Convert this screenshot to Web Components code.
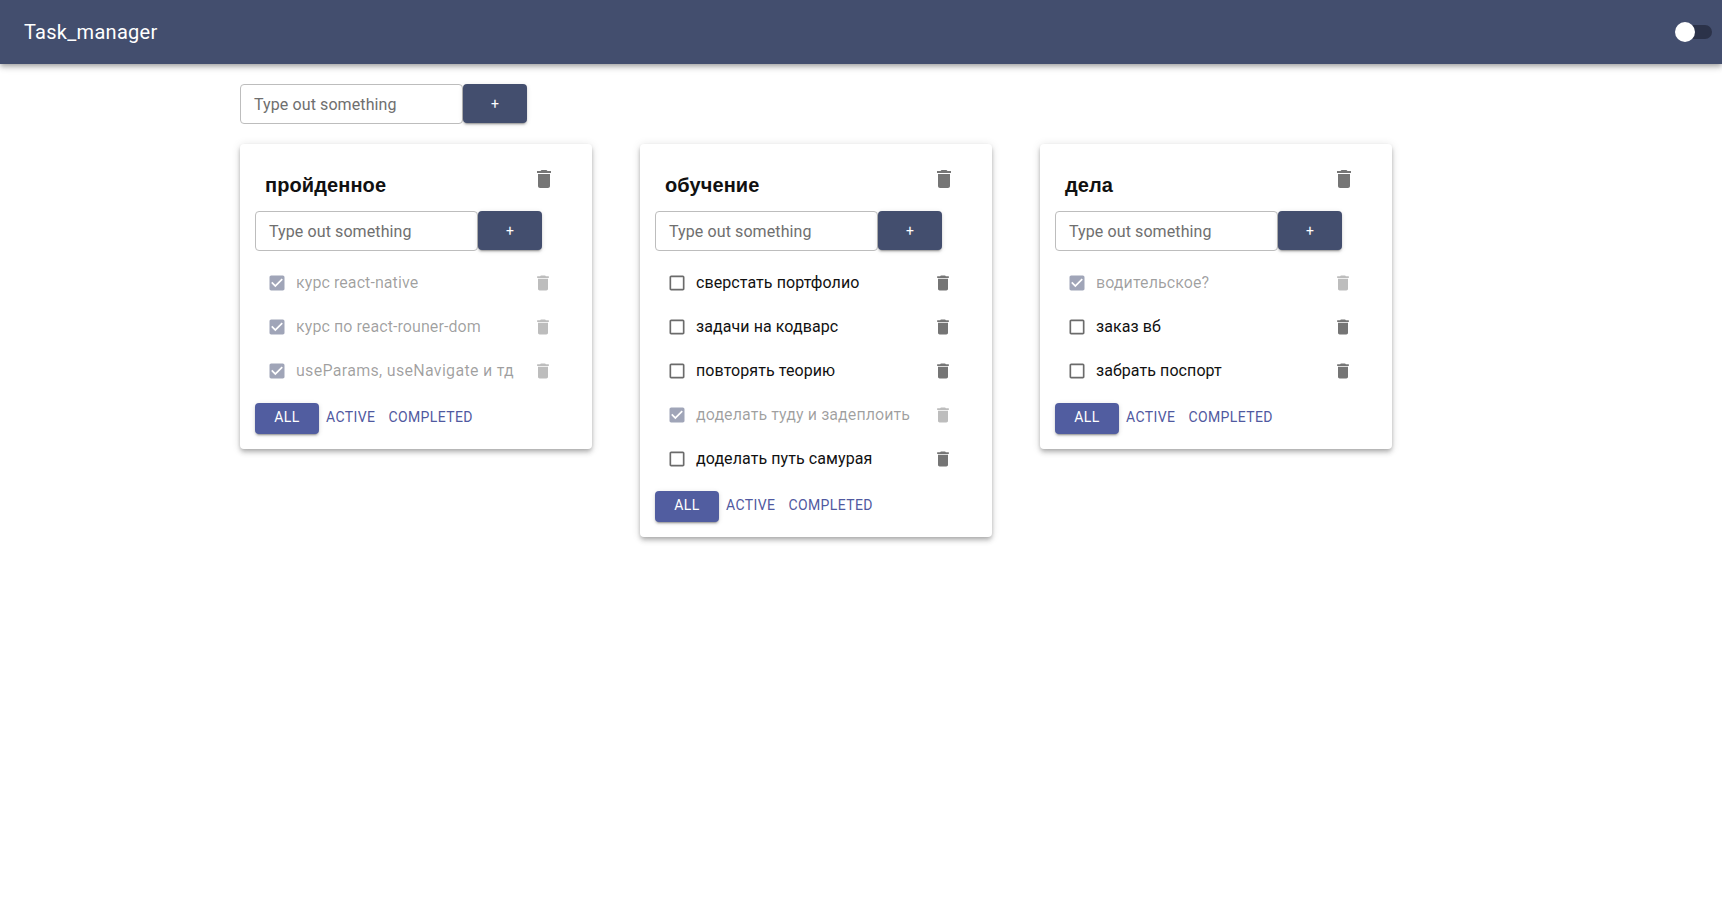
<!DOCTYPE html>
<html>
<head>
<meta charset="utf-8">
<style>
  html, body { margin: 0; padding: 0; background: #fff; }
  body { min-height: 100vh; font-family: Roboto, "Liberation Sans", sans-serif; }
</style>
</head>
<body>
<app-root></app-root>
<script>
const trash = (size, color) => `<svg width="${size}" height="${size}" viewBox="0 0 24 24" fill="${color}"><path d="M6 19c0 1.1.9 2 2 2h8c1.1 0 2-.9 2-2V7H6v12zM19 4h-3.5l-1-1h-5l-1 1H5v2h14V4z"/></svg>`;

customElements.define('app-bar', class extends HTMLElement {
  constructor() {
    super();
    this.attachShadow({ mode: 'open' });
    this.shadowRoot.innerHTML = `
<style>
:host {
  display: flex;
  align-items: center;
  justify-content: space-between;
  height: 64px;
  padding: 0 10px 0 24px;
  background: #434e6e;
  color: #fff;
  box-shadow: 0 2px 4px -1px rgba(0,0,0,.2), 0 4px 5px 0 rgba(0,0,0,.14), 0 1px 10px 0 rgba(0,0,0,.12);
  position: relative;
}
.title { font-size: 20px; font-weight: 400; line-height: 32px; letter-spacing: .28px; }
.track { position: relative; width: 34px; height: 14px; border-radius: 7px; background: #2b3249; }
.thumb { position: absolute; left: -3px; top: -3px; width: 20px; height: 20px; border-radius: 50%; background: #fff; }
</style>
<span class="title">Task_manager</span>
<span class="track"><span class="thumb"></span></span>`;
  }
});

customElements.define('add-form', class extends HTMLElement {
  constructor() {
    super();
    this.attachShadow({ mode: 'open' });
    this.shadowRoot.innerHTML = `
<style>
:host { display: flex; align-items: flex-start; }
.field {
  box-sizing: border-box;
  width: 223px;
  height: 40px;
  padding: 1px 13px 0;
  border: 1px solid #bdbdbd;
  border-radius: 4px;
  font: 400 16px/38px Roboto, sans-serif;
  letter-spacing: .1px;
  color: #6f6f6f;
}
button {
  width: 64px;
  height: 39px;
  margin-left: 0;
  border: 0;
  border-radius: 4px;
  background: #434e6e;
  color: #fff;
  font: 400 14px Roboto, sans-serif;
  box-shadow: 0 3px 1px -2px rgba(0,0,0,.2), 0 2px 2px 0 rgba(0,0,0,.14), 0 1px 5px 0 rgba(0,0,0,.12);
}
</style>
<div class="field">Type out something</div>
<button>+</button>`;
  }
});

customElements.define('task-row', class extends HTMLElement {
  constructor() {
    super();
    this.attachShadow({ mode: 'open' });
    const done = this.hasAttribute('done');
    const box = done
      ? `<svg width="20" height="20" viewBox="0 0 24 24" fill="#a0a5b8"><path d="M19 3H5c-1.11 0-2 .9-2 2v14c0 1.1.89 2 2 2h14c1.11 0 2-.9 2-2V5c0-1.1-.89-2-2-2zm-9 14l-5-5 1.41-1.41L10 14.17l7.59-7.59L19 8l-9 9z"/></svg>`
      : `<svg width="20" height="20" viewBox="0 0 24 24" fill="#6b6b6b"><path d="M19 5v14H5V5h14m0-2H5c-1.1 0-2 .9-2 2v14c0 1.1.9 2 2 2h14c1.1 0 2-.9 2-2V5c0-1.1-.9-2-2-2z"/></svg>`;
    this.shadowRoot.innerHTML = `
<style>
:host { display: flex; align-items: center; height: 44px; }
.check { width: 20px; height: 20px; margin-right: 9px; flex: none; }
.text { flex: 1; font-size: 16px; line-height: 24px; letter-spacing: var(--ls, .08px); white-space: nowrap; color: ${done ? 'rgba(0,0,0,.38)' : '#111'}; }
.del { width: 20px; height: 20px; margin-right: 24px; flex: none; }
svg { display: block; }
</style>
<span class="check">${box}</span>
<span class="text"><slot></slot></span>
<span class="del">${trash(20, done ? '#bdbdbd' : '#757575')}</span>`;
  }
});

customElements.define('filter-bar', class extends HTMLElement {
  constructor() {
    super();
    this.attachShadow({ mode: 'open' });
    this.shadowRoot.innerHTML = `
<style>
:host { display: flex; align-items: center; height: 31px; font-size: 14px; line-height: 29px; font-weight: 400; letter-spacing: .4px; color: #5059a0; }
.all {
  width: 64px;
  height: 31px;
  margin-right: 7px;
  text-align: center;
  border-radius: 4px;
  background: #515da0;
  color: #fff;
  box-shadow: 0 3px 1px -2px rgba(0,0,0,.2), 0 2px 2px 0 rgba(0,0,0,.14), 0 1px 5px 0 rgba(0,0,0,.12);
}
.active { margin-right: 13px; }
span:not(.all) { align-self: flex-start; }
</style>
<span class="all">ALL</span>
<span class="active">ACTIVE</span>
<span>COMPLETED</span>`;
  }
});

customElements.define('todo-card', class extends HTMLElement {
  constructor() {
    super();
    this.attachShadow({ mode: 'open' });
    this.shadowRoot.innerHTML = `
<style>
:host {
  display: block;
  box-sizing: border-box;
  width: 352px;
  padding: 0 15px 15px;
  border-radius: 4px;
  background: #fff;
  box-shadow: 0 2px 4px -1px rgba(0,0,0,.2), 0 4px 5px 0 rgba(0,0,0,.14), 0 1px 10px 0 rgba(0,0,0,.12);
}
header { display: flex; justify-content: space-between; align-items: flex-start; height: 67px; padding: 23px 21px 0 10px; box-sizing: border-box; }
h3 { margin: 6px 0 0; font: 700 20px/24px "Liberation Sans", sans-serif; letter-spacing: .1px; color: #111; }
svg { display: block; }
.tasks { margin: 10px 0; padding-left: 12px; }
</style>
<header>
  <h3>${this.getAttribute('title')}</h3>
  <span>${trash(24, '#757575')}</span>
</header>
<add-form></add-form>
<div class="tasks"><slot></slot></div>
<filter-bar></filter-bar>`;
  }
});

customElements.define('app-root', class extends HTMLElement {
  constructor() {
    super();
    this.attachShadow({ mode: 'open' });
    this.shadowRoot.innerHTML = `
<style>
:host { display: block; }
main { padding: 20px 0 0 240px; }
.cards { display: flex; align-items: flex-start; gap: 48px; margin-top: 20px; }
</style>
<app-bar></app-bar>
<main>
  <add-form></add-form>
  <div class="cards">
    <todo-card title="пройденное">
      <task-row done>курс react-native</task-row>
      <task-row done>курс по react-rouner-dom</task-row>
      <task-row done style="--ls:.3px">useParams, useNavigate и тд</task-row>
    </todo-card>
    <todo-card title="обучение">
      <task-row>сверстать портфолио</task-row>
      <task-row>задачи на кодварс</task-row>
      <task-row>повторять теорию</task-row>
      <task-row done>доделать туду и задеплоить</task-row>
      <task-row>доделать путь самурая</task-row>
    </todo-card>
    <todo-card title="дела">
      <task-row done>водительское?</task-row>
      <task-row>заказ вб</task-row>
      <task-row>забрать поспорт</task-row>
    </todo-card>
  </div>
</main>`;
  }
});
</script>
</body>
</html>
